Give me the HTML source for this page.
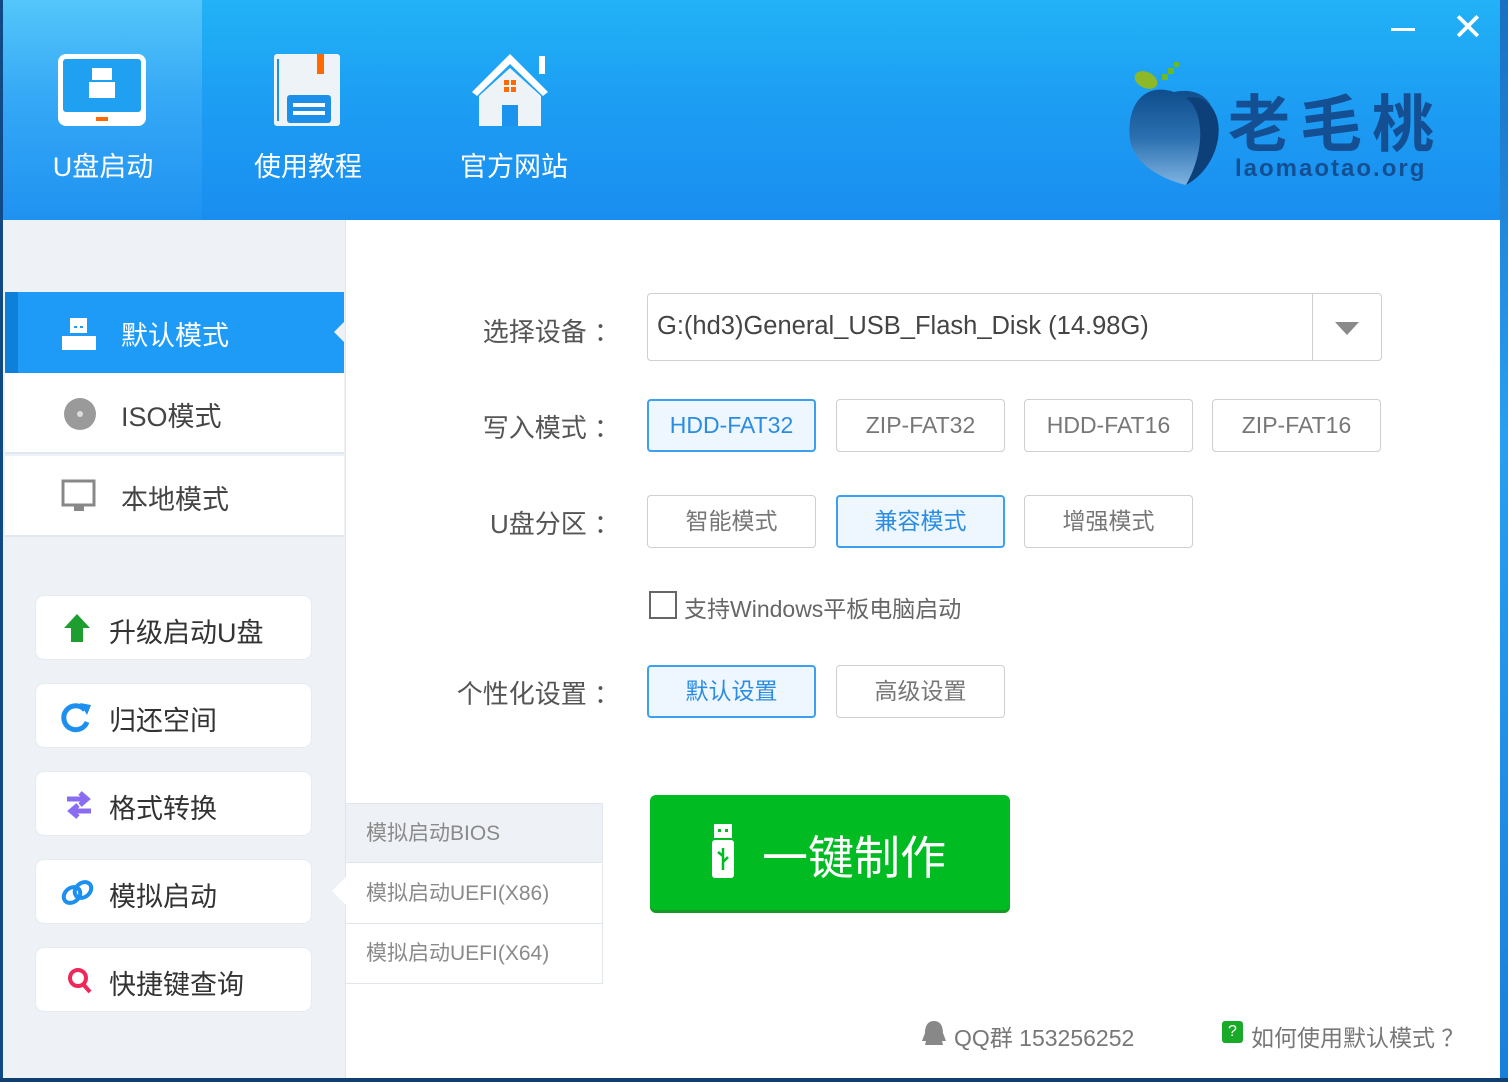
<!DOCTYPE html>
<html><head><meta charset="utf-8"><style>
*{margin:0;padding:0;box-sizing:border-box}
body{width:1508px;height:1082px;overflow:hidden;background:#0f5fa8;font-family:"Liberation Sans","Noto Sans CJK SC",sans-serif;position:relative}
.a{position:absolute}
#hdr{left:3px;top:0;width:1497px;height:220px;background:linear-gradient(180deg,#22b2f6 0%,#1c9cf3 50%,#1a8ef0 100%)}
#tab1{left:3px;top:0;width:199px;height:220px;background:linear-gradient(180deg,#54c6fa 0%,#35a8f6 45%,#1f92f1 100%)}
.nav{color:#fff;font-size:27px;text-align:center;width:200px}
#side{left:3px;top:220px;width:343px;height:858px;background:#eef2f7;border-right:1px solid #dfe5ec}
#main{left:346px;top:220px;width:1154px;height:858px;background:#fff}
.row{left:5px;width:339px;height:81px;background:#fff;border-bottom:2px solid #e1e7ee;font-size:27px;color:#444}
.row span{position:absolute;left:116px;top:22px}
.btn{left:35px;width:277px;height:65px;background:#fff;border:1px solid #e6ebf1;border-radius:9px;font-size:27px;color:#333}
.btn span{position:absolute;left:73px;top:15px}
.lbl{font-size:26px;color:#555;text-align:right;width:320px;left:300px}
.ob{height:53px;width:169px;border:1px solid #cfcfcf;border-radius:4px;font-size:23px;color:#777;text-align:center;line-height:51px;background:#fff}
.on{border:2px solid #3d9ff0;background:#eef7ff;color:#2b8ce0;line-height:49px}
.sub{left:346px;width:257px;height:60px;font-size:21px;color:#8a8a8a;border-bottom:1px solid #e1e6ec;background:#fff;padding-left:20px;line-height:60px;border-right:1px solid #e1e6ec}
</style></head><body>
<div class="a" id="hdr"></div>
<div class="a" id="tab1"></div>
<svg class="a" style="left:48px;top:50px" width="110" height="80" viewBox="0 0 110 80">
<rect x="10" y="4" width="88" height="72" rx="8" fill="#fff"/><rect x="15" y="9" width="78" height="53" rx="3" fill="#1fa0f0"/>
<rect x="44" y="18" width="20" height="12" fill="#fff"/><rect x="41" y="32" width="26" height="16" fill="#fff"/><rect x="48" y="67" width="12" height="4" fill="#ff6a00"/></svg>
<svg class="a" style="left:270px;top:50px" width="75" height="80" viewBox="0 0 75 80">
<rect x="4" y="4" width="66" height="72" rx="3" fill="#eef3f8"/><rect x="7" y="9" width="2" height="62" fill="#1c8fe8"/><rect x="47" y="4" width="7" height="20" fill="#ff6a00"/>
<rect x="17" y="45" width="44" height="28" rx="3" fill="#1c8fe8"/><rect x="23" y="53" width="32" height="4" fill="#fff"/><rect x="23" y="61" width="32" height="4" fill="#fff"/></svg>
<svg class="a" style="left:465px;top:50px" width="90" height="80" viewBox="0 0 90 80">
<polygon points="45,4 83,42 78,46 45,14 12,46 7,42" fill="#fff"/><rect x="74" y="6" width="6" height="18" fill="#fff"/>
<polygon points="45,18 76,46 76,76 14,76 14,46" fill="#eef3f8"/><rect x="37" y="55" width="16" height="21" fill="#1c94ef"/>
<rect x="39" y="30" width="5" height="5" fill="#ff6a00"/><rect x="46" y="30" width="5" height="5" fill="#ff6a00"/><rect x="39" y="37" width="5" height="5" fill="#ff6a00"/><rect x="46" y="37" width="5" height="5" fill="#ff6a00"/></svg>
<div class="a nav" style="left:3px;top:145px">U盘启动</div>
<div class="a nav" style="left:208px;top:145px">使用教程</div>
<div class="a nav" style="left:414px;top:145px">官方网站</div>
<div class="a" style="left:1391px;top:28px;width:24px;height:3px;background:#fff"></div>
<div class="a" style="left:1452px;top:8px;color:#fff;font-size:38px;line-height:40px">✕</div>
<svg class="a" style="left:1124px;top:60px" width="110" height="130" viewBox="0 0 110 130">
<defs><linearGradient id="pg" x1="0" y1="0" x2="0" y2="1"><stop offset="0" stop-color="#0f4d8c"/><stop offset="0.5" stop-color="#2a6fb0"/><stop offset="1" stop-color="#7fb3e0"/></linearGradient></defs>
<ellipse cx="22" cy="20" rx="12" ry="8" fill="#8cb82a" transform="rotate(25 22 20)"/>
<rect x="38" y="14" width="6" height="6" fill="#6bb82a"/><rect x="44" y="8" width="6" height="6" fill="#6bb82a"/><rect x="50" y="2" width="5" height="5" fill="#6bb82a"/>
<path d="M50 32 C20 22 2 45 6 80 C10 105 40 120 62 125 C85 105 95 80 90 55 C86 35 70 28 50 32Z" fill="url(#pg)"/>
<path d="M62 38 C80 50 82 90 62 125 C90 110 100 75 92 55 C86 40 75 35 62 38Z" fill="#0d3f78"/></svg>
<div class="a" style="left:1228px;top:88px;font-size:62px;font-weight:bold;color:#134f92;letter-spacing:10px;line-height:76px">老毛桃</div>
<div class="a" style="left:1235px;top:155px;font-size:24px;font-weight:bold;color:#134f92;letter-spacing:2px">laomaotao.org</div>
<div class="a" style="left:1500px;top:0;width:8px;height:1082px;background:linear-gradient(180deg,#1a6fc0,#2a9ef0 40%,#1a7fd8)"></div>

<div class="a" id="side"></div>
<div class="a" id="main"></div>
<div class="a" style="left:0;top:0;width:3px;height:1082px;background:#0f4a86"></div>
<div class="a" style="left:0;top:1078px;width:1508px;height:4px;background:#0e3f70"></div>

<div class="a" style="left:5px;top:292px;width:339px;height:81px;background:#1e9bf6"></div>
<div class="a" style="left:5px;top:292px;width:13px;height:81px;background:#0f80da"></div>
<div class="a" style="left:334px;top:322px;width:0;height:0;border-top:10px solid transparent;border-bottom:10px solid transparent;border-right:10px solid #eef2f7"></div>
<svg class="a" style="left:61px;top:316px" width="36" height="36"><rect x="9" y="2" width="17" height="15" fill="#fff"/><rect x="13" y="10" width="3" height="2" fill="#1e9bf6"/><rect x="19" y="10" width="3" height="2" fill="#1e9bf6"/><rect x="1" y="20" width="34" height="14" fill="#fff"/></svg>
<div class="a" style="left:121px;top:314px;font-size:27px;color:#fff">默认模式</div>
<div class="a row" style="top:373px"><svg class="a" style="left:58px;top:24px" width="34" height="34"><circle cx="17" cy="17" r="16" fill="#9a9a9a"/><circle cx="17" cy="17" r="3" fill="#ddd"/></svg><span>ISO模式</span></div>
<div class="a row" style="top:456px"><svg class="a" style="left:56px;top:22px" width="36" height="36"><rect x="2" y="3" width="31" height="24" fill="none" stroke="#888" stroke-width="3"/><rect x="13" y="28" width="10" height="5" fill="#888"/></svg><span>本地模式</span></div>

<div class="a btn" style="top:595px"><svg class="a" style="left:26px;top:16px" width="30" height="32"><polygon points="15,2 28,16 21,16 21,30 9,30 9,16 2,16" fill="#1e9e2e"/></svg><span>升级启动U盘</span></div>
<div class="a btn" style="top:683px"><svg class="a" style="left:24px;top:16px" width="32" height="34"><path d="M25 10 A12 12 0 1 0 27 22" fill="none" stroke="#1d8fef" stroke-width="5"/><polygon points="20,3 31,5 27,15" fill="#1d8fef"/></svg><span>归还空间</span></div>
<div class="a btn" style="top:771px"><svg class="a" style="left:28px;top:18px" width="30" height="30"><path d="M3 9 H22 M16 3 L23 9 L16 15" stroke="#8a6cf0" stroke-width="5" fill="none"/><path d="M27 21 H8 M14 15 L7 21 L14 27" stroke="#8a6cf0" stroke-width="5" fill="none"/></svg><span>格式转换</span></div>
<div class="a btn" style="top:859px"><svg class="a" style="left:24px;top:18px" width="36" height="30"><ellipse cx="12" cy="17" rx="9" ry="7" transform="rotate(-40 12 17)" fill="none" stroke="#1d8fef" stroke-width="4"/><ellipse cx="23" cy="12" rx="9" ry="7" transform="rotate(-40 23 12)" fill="none" stroke="#1d8fef" stroke-width="4"/></svg><span>模拟启动</span></div>
<div class="a btn" style="top:947px"><svg class="a" style="left:30px;top:18px" width="30" height="30"><circle cx="12" cy="12" r="8" fill="none" stroke="#f0285a" stroke-width="4"/><path d="M17 18 L24 26" stroke="#f0285a" stroke-width="4"/></svg><span>快捷键查询</span></div>

<div class="a" style="left:332px;top:877px;width:0;height:0;border-top:14px solid transparent;border-bottom:14px solid transparent;border-right:14px solid #fff"></div>
<div class="a sub" style="top:803px;background:#eef2f6;border-top:1px solid #e1e6ec">模拟启动BIOS</div>
<div class="a sub" style="top:864px">模拟启动UEFI(X86)</div>
<div class="a sub" style="top:924px">模拟启动UEFI(X64)</div>

<div class="a lbl" style="top:312px">选择设备 ：</div>
<div class="a lbl" style="top:408px">写入模式 ：</div>
<div class="a lbl" style="top:504px">U盘分区 ：</div>
<div class="a lbl" style="top:674px">个性化设置 ：</div>
<div class="a" style="left:647px;top:293px;width:735px;height:68px;border:1px solid #cfcfcf;border-radius:4px"></div>
<div class="a" style="left:1312px;top:294px;width:1px;height:66px;background:#cfcfcf"></div>
<div class="a" style="left:1335px;top:322px;width:0;height:0;border-left:12px solid transparent;border-right:12px solid transparent;border-top:13px solid #8a8a8a"></div>
<div class="a" style="left:657px;top:312px;font-size:25.5px;color:#444">G:(hd3)General_USB_Flash_Disk (14.98G)</div>

<div class="a ob on" style="left:647px;top:399px">HDD-FAT32</div>
<div class="a ob" style="left:836px;top:399px">ZIP-FAT32</div>
<div class="a ob" style="left:1024px;top:399px">HDD-FAT16</div>
<div class="a ob" style="left:1212px;top:399px">ZIP-FAT16</div>
<div class="a ob" style="left:647px;top:495px">智能模式</div>
<div class="a ob on" style="left:836px;top:495px">兼容模式</div>
<div class="a ob" style="left:1024px;top:495px">增强模式</div>
<div class="a" style="left:649px;top:591px;width:28px;height:28px;border:2px solid #666;background:#fff"></div>
<div class="a" style="left:684px;top:590px;font-size:23px;color:#666">支持Windows平板电脑启动</div>
<div class="a ob on" style="left:647px;top:665px">默认设置</div>
<div class="a ob" style="left:836px;top:665px">高级设置</div>

<div class="a" style="left:650px;top:795px;width:360px;height:115px;background:#00bb21;border-radius:6px;box-shadow:0 3px 0 #159a25"></div>
<svg class="a" style="left:710px;top:822px" width="32" height="60"><rect x="4" y="2" width="18" height="14" fill="#fff"/><rect x="8" y="7" width="3" height="3" fill="#00bb21"/><rect x="15" y="7" width="3" height="3" fill="#00bb21"/><rect x="2" y="18" width="22" height="38" rx="3" fill="#fff"/><path d="M13 26 V48 M13 34 L8 30 M13 40 L18 35" stroke="#00bb21" stroke-width="2.5" fill="none"/></svg>
<div class="a" style="left:762px;top:822px;font-size:46px;color:#fff">一键制作</div>

<svg class="a" style="left:920px;top:1019px" width="28" height="28"><path d="M14 2 C6 2 5 10 5 14 L2 22 L6 22 L5 26 L23 26 L22 22 L26 22 L23 14 C23 10 22 2 14 2Z" fill="#888"/></svg>
<div class="a" style="left:954px;top:1019px;font-size:23px;color:#777">QQ群 153256252</div>
<div class="a" style="left:1222px;top:1021px;width:21px;height:22px;background:#1aaa2a;border-radius:3px;color:#fff;font-size:16px;text-align:center;line-height:22px">?</div>
<div class="a" style="left:1251px;top:1019px;font-size:23px;color:#777">如何使用默认模式 ？</div>
</body></html>
